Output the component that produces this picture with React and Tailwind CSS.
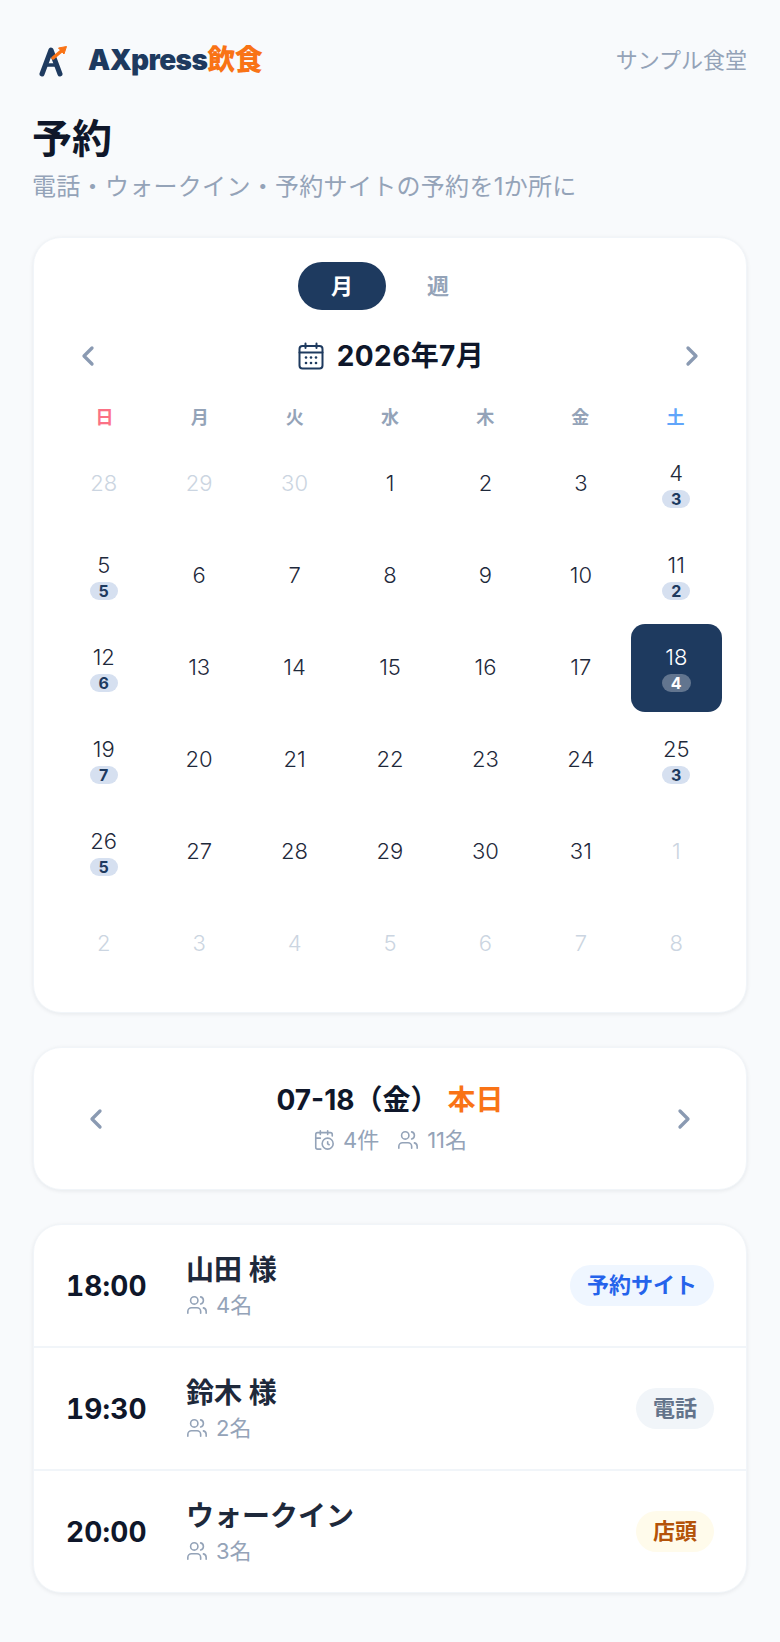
import { ChevronLeft, ChevronRight, CalendarClock, Users } from "lucide-react";

const weekdays = [
  { label: "日", color: "text-[#fb7185]" },
  { label: "月", color: "text-[#94a3b8]" },
  { label: "火", color: "text-[#94a3b8]" },
  { label: "水", color: "text-[#94a3b8]" },
  { label: "木", color: "text-[#94a3b8]" },
  { label: "金", color: "text-[#94a3b8]" },
  { label: "土", color: "text-[#60a5fa]" },
];

const days = [
  { d: 28, out: true }, { d: 29, out: true }, { d: 30, out: true }, { d: 1 }, { d: 2 }, { d: 3 }, { d: 4, n: 3 },
  { d: 5, n: 5 }, { d: 6 }, { d: 7 }, { d: 8 }, { d: 9 }, { d: 10 }, { d: 11, n: 2 },
  { d: 12, n: 6 }, { d: 13 }, { d: 14 }, { d: 15 }, { d: 16 }, { d: 17 }, { d: 18, n: 4, sel: true },
  { d: 19, n: 7 }, { d: 20 }, { d: 21 }, { d: 22 }, { d: 23 }, { d: 24 }, { d: 25, n: 3 },
  { d: 26, n: 5 }, { d: 27 }, { d: 28 }, { d: 29 }, { d: 30 }, { d: 31 }, { d: 1, out: true },
  { d: 2, out: true }, { d: 3, out: true }, { d: 4, out: true }, { d: 5, out: true }, { d: 6, out: true }, { d: 7, out: true }, { d: 8, out: true },
];

const reservations = [
  { time: "18:00", name: "山田 様", people: "4名", tag: "予約サイト", tagClass: "bg-[#eff6ff] text-[#2563eb]" },
  { time: "19:30", name: "鈴木 様", people: "2名", tag: "電話", tagClass: "bg-[#f1f5f9] text-[#64748b]" },
  { time: "20:00", name: "ウォークイン", people: "3名", tag: "店頭", tagClass: "bg-[#fffbeb] text-[#b45309]" },
];

function Logo() {
  return (
    <svg width="32" height="34" viewBox="0 0 32 34" fill="none">
      <path d="M5 31 L14 7 L23 31" stroke="#1e3a5f" strokeWidth="5" strokeLinecap="round" strokeLinejoin="round" />
      <path d="M9 22 L19 22" stroke="#1e3a5f" strokeWidth="3.5" />
      <path d="M16 15 L25 7.5" stroke="#f97316" strokeWidth="3.5" strokeLinecap="round" />
      <path d="M21.5 5 L29.5 3.5 L27 11 Z" fill="#f97316" stroke="#f97316" strokeLinejoin="round" />
    </svg>
  );
}

function CalendarDots() {
  return (
    <svg width="26" height="28" viewBox="0 0 26 28" fill="none" stroke="#1e3a5f" strokeWidth="2" strokeLinecap="round">
      <rect x="1.5" y="4" width="23" height="22.5" rx="3" />
      <path d="M1.5 10.5H24.5M7.5 1.5V6M18.5 1.5V6" />
      <g fill="#1e3a5f" stroke="none">
        {[8, 13, 18].map((x) => <circle key={x} cx={x} cy="15.5" r="1.3" />)}
        {[8, 13, 18].map((x) => <circle key={x} cx={x} cy="21" r="1.3" />)}
      </g>
    </svg>
  );
}

function DayCell({ day }) {
  if (day.sel) {
    return (
      <div className="h-[88px] pb-[2px] rounded-[14px] bg-[#1e3a5f] flex flex-col items-center justify-center text-white">
        <span className="text-[22px] leading-[28px] font-light">{day.d}</span>
        <span className="mt-[3px] w-[29px] h-[18px] rounded-full bg-[#62758f] text-[16px] leading-[18px] font-bold text-center">{day.n}</span>
      </div>
    );
  }
  return (
    <div className="h-[88px] pb-[2px] flex flex-col items-center justify-center">
      <span className={`text-[22px] leading-[28px] font-light ${day.out ? "text-[#cbd5e1]" : "text-[#1e293b]"}`}>{day.d}</span>
      {day.n && (
        <span className="mt-[3px] w-[28px] h-[18px] rounded-full bg-[#d6e0f0] text-[#1e3a5f] text-[16px] leading-[18px] font-bold text-center">{day.n}</span>
      )}
    </div>
  );
}

export default function App() {
  return (
    <div className="min-h-[1642px] bg-[#f8fafc] px-[33px] pt-[36px] font-['Inter','Noto_Sans_CJK_JP',sans-serif]">
      <header className="flex items-center justify-between pl-[4px] h-[48px]">
        <div className="flex items-center gap-[19px]">
          <Logo />
          <span className="text-[28px] leading-[34px] font-black tracking-[-0.6px] text-[#1e3a5f]">
            AXpress<span className="text-[#f97316]">飲食</span>
          </span>
        </div>
        <span className="text-[22px] text-[#94a3b8]">サンプル食堂</span>
      </header>

      <h1 className="mt-[31px] -ml-[1px] text-[40px] leading-[48px] font-bold text-[#0f172a]">予約</h1>
      <p className="mt-[7px] -ml-[1px] text-[24px] leading-[34px] tracking-[0.3px] text-[#94a3b8]">電話・ウォークイン・予約サイトの予約を1か所に</p>

      <section className="mt-[33px] h-[776px] rounded-[28px] bg-white border border-[#f1f5f9] shadow-[0_1px_4px_rgba(15,23,42,0.08)] px-[24px] pt-[24px]">
        <div className="flex justify-center gap-[8px]">
          <button className="w-[88px] h-[48px] rounded-full bg-[#1e3a5f] text-white text-[22px] font-bold">月</button>
          <button className="w-[88px] h-[48px] rounded-full text-[#94a3b8] text-[22px] font-bold">週</button>
        </div>
        <div className="mt-[22px] h-[48px] flex items-center justify-between px-[14px]">
          <ChevronLeft size={32} strokeWidth={2.5} className="text-[#8a9ab2]" />
          <div className="ml-[2px] flex items-center gap-[13px]">
            <CalendarDots />
            <span className="text-[28px] tracking-[0.4px] font-bold text-[#0f172a]">2026年7月</span>
          </div>
          <ChevronRight size={32} strokeWidth={2.5} className="text-[#8a9ab2]" />
        </div>
        <div className="mt-[17px] grid grid-cols-7 gap-x-[4px] h-[40px] items-center px-[1px]">
          {weekdays.map((w) => (
            <div key={w.label} className={`text-center text-[18px] font-bold ${w.color}`}>{w.label}</div>
          ))}
        </div>
        <div className="mt-[3px] grid grid-cols-7 gap-[4px]">
          {days.map((day, i) => <DayCell key={i} day={day} />)}
        </div>
      </section>

      <section className="mt-[34px] h-[143px] rounded-[28px] bg-white border border-[#f1f5f9] shadow-[0_1px_4px_rgba(15,23,42,0.08)] flex items-center justify-between px-[46px]">
        <ChevronLeft size={32} strokeWidth={2.5} className="text-[#8a9ab2]" />
        <div className="flex flex-col items-center">
          <div className="text-[28px] leading-[36px] font-bold text-[#0f172a]">
            07-18（金）<span className="ml-[9px] text-[#f97316]">本日</span>
          </div>
          <div className="mt-[7px] flex items-center text-[22px] leading-[30px] text-[#94a3b8]">
            <CalendarClock size={22} strokeWidth={1.75} />
            <span className="ml-[8px]">4件</span>
            <Users size={22} strokeWidth={1.75} className="ml-[18px]" />
            <span className="ml-[8px]">11名</span>
          </div>
        </div>
        <ChevronRight size={32} strokeWidth={2.5} className="text-[#8a9ab2]" />
      </section>

      <section className="mt-[34px] rounded-[28px] bg-white border border-[#f1f5f9] shadow-[0_1px_4px_rgba(15,23,42,0.08)] overflow-hidden">
        {reservations.map((r, i) => (
          <div key={r.time} className={`flex items-center px-[32px] ${i < 2 ? "h-[123px] border-b-2 border-[#f1f5f9]" : "h-[121px]"}`}>
            <div className="w-[120px] text-[28px] tracking-[0.2px] font-bold tabular-nums text-[#0f172a]">{r.time}</div>
            <div className="flex-1">
              <div className="text-[28px] leading-[36px] font-bold text-[#1e293b]">{r.name}</div>
              <div className="mt-[2px] flex items-center gap-[8px] text-[22px] leading-[30px] text-[#94a3b8]">
                <Users size={22} strokeWidth={1.75} />
                <span>{r.people}</span>
              </div>
            </div>
            <span className={`h-[41px] px-[17px] rounded-full text-[22px] leading-[41px] font-bold ${r.tagClass}`}>{r.tag}</span>
          </div>
        ))}
      </section>
    </div>
  );
}
